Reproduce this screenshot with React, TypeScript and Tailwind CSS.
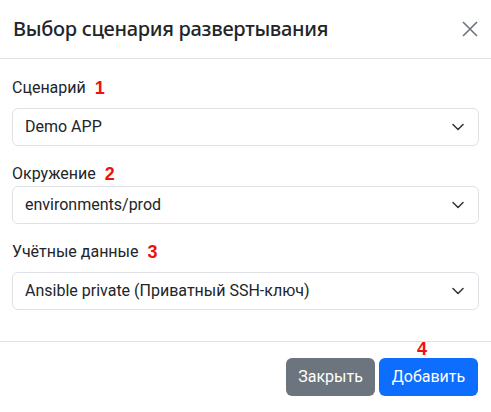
import React from "react";

function Chevron() {
  return (
    <svg width="12" height="8" viewBox="0 0 12 8" className="shrink-0">
      <path d="M1 1.5 L6 6.5 L11 1.5" fill="none" stroke="#343a40" strokeWidth="1.6" strokeLinecap="round" strokeLinejoin="round" />
    </svg>
  );
}

function Select({ value }: { value: string }) {
  return (
    <div className="flex items-center justify-between h-[38px] border border-[#dee2e6] rounded-[6px] pl-[12px] pr-[14px] text-[16px] text-[#212529] bg-white">
      <span>{value}</span>
      <Chevron />
    </div>
  );
}

function Label({ text, num, className }: { text: string; num: string; className?: string }) {
  return (
    <div className={"flex items-center h-[24px] text-[16px] text-[#212529] " + (className ?? "")}>
      <span>{text}</span>
      <span className="ml-[9px] text-[18px] font-bold text-[#ee1111] [font-family:'Liberation_Sans',Arial,sans-serif]">{num}</span>
    </div>
  );
}

export default function App() {
  return (
    <div className="w-[491px] h-[412px] bg-white [font-family:Roboto,sans-serif] overflow-hidden">
      <div className="flex items-center justify-between h-[59px] border-b border-[#dee2e6] pl-[13px] pr-[13px]">
        <div className="text-[20px] font-medium text-[#212529] leading-none tracking-[-0.3px] [font-family:'Noto_Sans',sans-serif]">Выбор сценария развертывания</div>
        <svg width="16" height="16" viewBox="0 0 16 16">
          <path d="M1 1 L15 15 M15 1 L1 15" stroke="#6c757d" strokeWidth="1.6" fill="none" />
        </svg>
      </div>
      <div className="px-[12px] pt-[17px] h-[282px]">
        <Label text="Сценарий" num="1" className="mb-[8px]" />
        <Select value="Demo APP" />
        <Label text="Окружение" num="2" className="mt-[16px]" />
        <Select value="environments/prod" />
        <Label text="Учётные данные" num="3" className="mt-[16px] mb-[8px]" />
        <Select value="Ansible private (Приватный SSH-ключ)" />
      </div>
      <div className="relative border-t border-[#dee2e6] flex justify-end gap-[4px] pt-[16px] pr-[13px]">
        <span className="absolute left-[417px] top-[-6px] text-[18px] font-bold text-[#ee1111] [font-family:'Liberation_Sans',Arial,sans-serif]">4</span>
        <button className="h-[38px] w-[89px] rounded-[6px] bg-[#6c757d] text-white text-[16px]">Закрыть</button>
        <button className="h-[38px] w-[99px] rounded-[6px] bg-[#0d6efd] text-white text-[16px]">Добавить</button>
      </div>
    </div>
  );
}
